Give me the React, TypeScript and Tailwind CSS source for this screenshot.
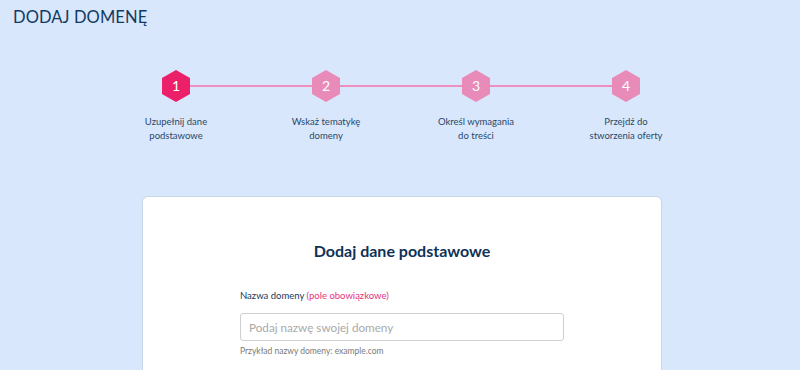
const steps = [
  { n: 1, label: ["Uzupełnij dane", "podstawowe"], active: true },
  { n: 2, label: ["Wskaż tematykę", "domeny"], active: false },
  { n: 3, label: ["Określ wymagania", "do treści"], active: false },
  { n: 4, label: ["Przejdź do", "stworzenia oferty"], active: false },
];

function Hex({ n, active }: { n: number; active: boolean }) {
  return (
    <svg width="28" height="32" viewBox="0 0 28 32" className="relative">
      <polygon
        points="14,0 28,8 28,24 14,32 0,24 0,8"
        fill={active ? "#ec1f69" : "#e98bb9"}
      />
      <text
        x="14"
        y="21"
        textAnchor="middle"
        fill="#ffffff"
        fontSize="14"
        fontFamily="Lato, sans-serif"
      >
        {n}
      </text>
    </svg>
  );
}

export default function App() {
  return (
    <div className="h-[370px] w-full overflow-hidden bg-[#d8e7fb] font-['Lato',sans-serif]">
      <h1 className="pl-[13px] pt-[7px] text-[16.5px] leading-[20px] tracking-[0.1px] text-[#123b63]">
        DODAJ DOMENĘ
      </h1>

      {/* stepper */}
      <div className="relative ml-[101px] mt-[43px] flex w-[600px]">
        <div className="absolute left-[75px] right-[75px] top-[15px] h-[2px] bg-[#ef8fbe]" />
        {steps.map((s) => (
          <div key={s.n} className="flex w-[150px] flex-col items-center">
            <Hex n={s.n} active={s.active} />
            <div className="mt-[13px] text-center text-[9.5px] leading-[14px] text-[#2b4868]">
              <div>{s.label[0]}</div>
              <div>{s.label[1]}</div>
            </div>
          </div>
        ))}
      </div>

      {/* card */}
      <div className="ml-[142px] mt-[53px] h-[200px] w-[520px] rounded-[6px] border border-[#c9d6e6] bg-white">
        <h2 className="pt-[42px] text-center text-[16px] font-bold leading-[24px] text-[#0f3257]">
          Dodaj dane podstawowe
        </h2>
        <div className="ml-[97px] mt-[27px] w-[324px]">
          <div className="text-[9.5px] leading-[12px] text-[#183a5e]">
            Nazwa domeny <span className="text-[#e8327f]">(pole obowiązkowe)</span>
          </div>
          <input
            type="text"
            placeholder="Podaj nazwę swojej domeny"
            className="mt-[11px] h-[28px] w-[324px] rounded-[3px] border border-[#cfcfcf] bg-white px-[8px] text-[11.7px] text-[#333] placeholder-[#a9a9a9] outline-none"
          />
          <div className="mt-[4px] text-[8.5px] leading-[12px] text-[#7a7a7a]">
            Przykład nazwy domeny: example.com
          </div>
        </div>
      </div>
    </div>
  );
}
